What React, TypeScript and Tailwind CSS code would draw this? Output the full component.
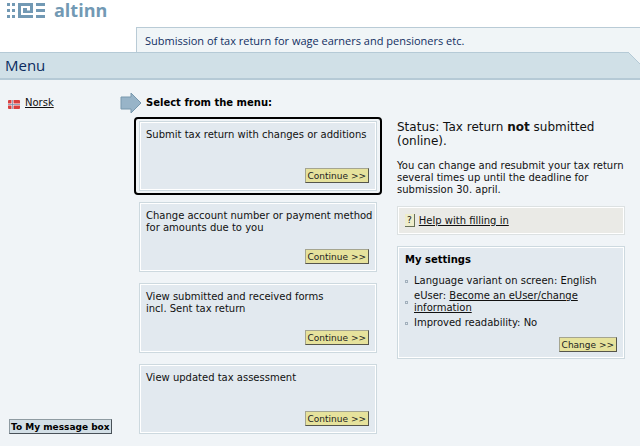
const menuItems = [
  { text: "Submit tax return with changes or additions", selected: true },
  { text: "Change account number or payment method\nfor amounts due to you", selected: false },
  { text: "View submitted and received forms\nincl. Sent tax return", selected: false },
  { text: "View updated tax assessment", selected: false },
];

const Logo = () => (
  <div className="flex h-[27px] items-start gap-2 px-[6px] text-[#7299b4]">
    <svg width="40" height="15" viewBox="0 0 40 15" fill="currentColor" className="mt-[3px] shrink-0" aria-hidden="true">
      {[0, 6, 12].map((y) => (
        <g key={y}>
          <rect x="1" y={y} width="3" height="3" />
          <rect x="6" y={y} width="3" height="3" />
          <rect x="30" y={y} width="9" height="3" />
        </g>
      ))}
      <path d="M12 0h15v10H17V5h4v2.5h3V3h-9v9h12v3H12z" />
    </svg>
    <span className="font-['Open_Sans',sans-serif] text-[18px] leading-5 font-bold">altinn</span>
  </div>
);

const YellowButton = ({ label }: { label: string }) => (
  <button className="h-[15px] border border-t-[#a5a590] border-l-[#a5a590] border-r-[#55554c] border-b-[#55554c] bg-[#e6e29c] px-[2px] text-[9px] leading-3 text-[#222]">
    {label}
  </button>
);

const MenuCard = ({ text, selected }: { text: string; selected: boolean }) => (
  <li className={selected ? "-my-1 rounded-sm border-2 border-black px-[3px] py-[2px]" : "px-[5px]"}>
    <div className="border border-[#cdd9df] bg-white p-px">
      <div className="flex h-[66px] flex-col justify-between bg-[#e2e9ef] pt-[6px] pr-[6px] pb-[6px] pl-[5px]">
        <p className="text-[10px] leading-3 whitespace-pre">{text}</p>
        <div className="flex justify-end">
          <YellowButton label="Continue >>" />
        </div>
      </div>
    </div>
  </li>
);

const App = () => {
  return (
    <div className="min-h-screen bg-[#f0f4f7] font-['DejaVu_Sans',sans-serif] text-[10px] leading-3 text-[#111]">
      <header>
        <div className="bg-white">
          <Logo />
          <div className="ml-[136px] border-t border-l border-[#b9cbd6] bg-[#f0f5f7] px-2 pt-[2px] font-['Open_Sans',sans-serif] text-[11px] leading-[22px] font-medium text-[#102f62]">
            Submission of tax return for wage earners and pensioners etc.
          </div>
        </div>
        <div className="relative border-t border-b-2 border-[#b5cad6] bg-[#d0e0e7] px-[5px]">
          <h1 className="font-['Open_Sans',sans-serif] text-[15px] leading-[25px] font-medium text-[#0b2b60]">Menu</h1>
          {/* Cut corner of the title bar */}
          <svg className="absolute -top-px right-0" width="12" height="12" viewBox="0 0 12 12" aria-hidden="true">
            <path d="M0 0h12v12z" fill="#f0f5f7" />
            <path d="M0 0l12 12" stroke="#b5cad6" />
          </svg>
        </div>
      </header>

      <main className="flex">
        <aside className="flex w-[120px] shrink-0 flex-col justify-between pt-4 pl-2">
          <a href="#norsk" className="flex items-center gap-1">
            <svg width="13" height="10" viewBox="0 0 13 10" className="mt-1" aria-hidden="true">
              <rect width="12" height="9" rx="1" fill="#d93f3f" />
              <path d="M4.5 0v9M0 4.5h12" stroke="#fff" strokeWidth="2" />
              <path d="M4.5 0v9M0 4.5h12" stroke="#7b8aa8" strokeWidth="0.8" />
            </svg>
            <span className="underline">Norsk</span>
          </a>
          <button className="ml-px h-[15px] self-start border border-t-[#8f9ba2] border-l-[#8f9ba2] border-r-[#495158] border-b-[#495158] bg-[#d3dfe6] px-px text-[9px] leading-3 font-bold whitespace-nowrap text-black">
            To My message box
          </button>
        </aside>

        <section className="w-[262px] shrink-0 pt-3">
          <h2 className="flex items-center gap-1 font-bold text-black">
            <svg width="22" height="22" viewBox="0 0 22 22" aria-hidden="true">
              <path d="M1 5h10V1l10 10-10 10v-4H1z" fill="#98b4c8" stroke="#7898ad" />
            </svg>
            Select from the menu:
          </h2>
          <ul className="mt-[7px] ml-[14px] flex flex-col gap-[11px]">
            {menuItems.map((item) => (
              <MenuCard key={item.text} {...item} />
            ))}
          </ul>
        </section>

        <section className="mr-[15px] ml-[15px] min-w-0 flex-1 pt-10">
          <h2 className="text-[12px] leading-[14px]">
            Status: Tax return <b>not</b> submitted (online).
          </h2>
          <p className="mt-3">
            You can change and resubmit your tax return several times up until the deadline for submission 30. april.
          </p>
          <div className="mt-[10px] border border-[#dce1e2] bg-white p-px">
            <div className="flex items-center gap-1 bg-[#eaeae6] px-[6px] py-[6px]">
              <span className="border-r border-b border-[#687058] bg-[#eeedcb] px-[2px] text-[9px]">?</span>
              <a href="#help" className="underline">Help with filling in</a>
            </div>
          </div>
          <div className="mt-[11px] border border-[#cdd9df] bg-white p-px">
            <div className="bg-[#e2e9ef] px-[6px] pt-[6px] pb-[5px]">
              <h3 className="font-bold text-black">My settings</h3>
              <ul className="mt-[9px] flex flex-col gap-[3px]">
                <li className="flex items-center gap-[6px]">
                  <i className="size-[3px] shrink-0 border border-[#a2b0bc]" />
                  <span>Language variant on screen: English</span>
                </li>
                <li className="flex items-center gap-[6px]">
                  <i className="size-[3px] shrink-0 border border-[#a2b0bc]" />
                  <span>
                    eUser: <a href="#euser" className="underline">Become an eUser/change information</a>
                  </span>
                </li>
                <li className="flex items-center gap-[6px]">
                  <i className="size-[3px] shrink-0 border border-[#a2b0bc]" />
                  <span>Improved readability: No</span>
                </li>
              </ul>
              <div className="mt-2 flex justify-end">
                <YellowButton label="Change >>" />
              </div>
            </div>
          </div>
        </section>
      </main>
    </div>
  );
};

export default App;
